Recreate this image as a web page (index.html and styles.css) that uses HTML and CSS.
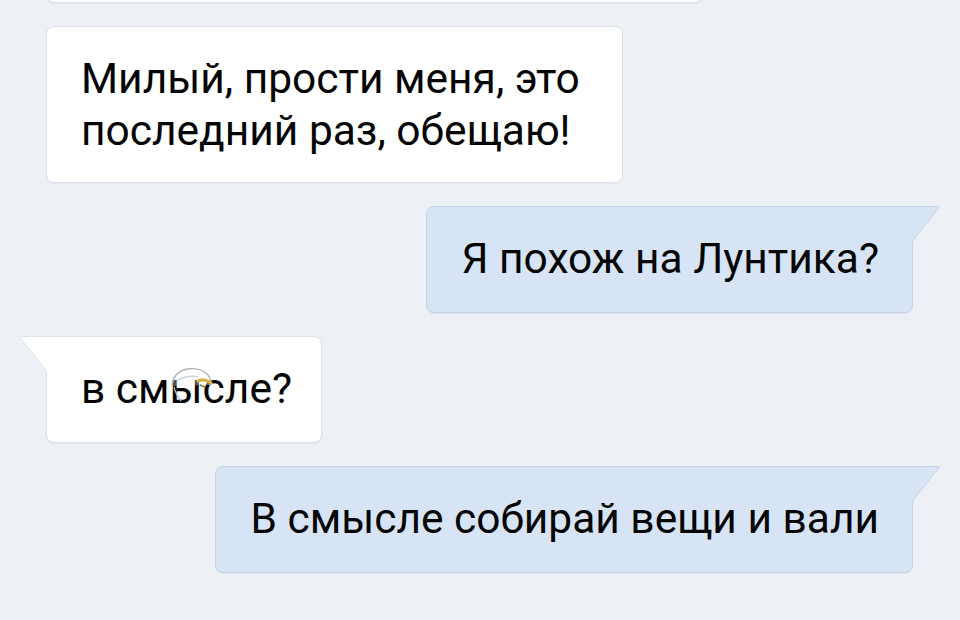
FILE: index.html
```html
<!DOCTYPE html>
<html lang="ru">
<head>
<meta charset="utf-8">
<title>Чат</title>
<link rel="stylesheet" href="styles.css">
</head>
<body>
<div class="chat">
  <div class="msg in stub"></div>
  <div class="msg in roomy"><p class="text">Милый, прости меня, это<br>последний раз, обещаю!</p></div>
  <div class="msg out">
    <p class="text">Я похож на Лунтика?</p>
    <svg class="tail tail-out" width="29" height="38" viewBox="0 0 29 38" aria-hidden="true">
      <path d="M0 0 H27.5 Q29 0.3 28 2 L3.2 33 Q1.5 35.5 1.5 38 H0 Z" fill="#d6e4f5"/>
      <path d="M0 0.5 H27.3 Q28.6 0.8 27.6 2.2 L3 33 Q1.5 35.5 1.5 38" fill="none" stroke="#c3d2e5" stroke-width="1"/>
    </svg>
  </div>
  <div class="msg in tailed">
    <p class="text">в смысле?</p>
    <svg class="tail tail-in" width="29" height="38" viewBox="0 0 29 38" aria-hidden="true">
      <path d="M29 0 H1.5 Q0 0.3 1 2 L25.8 33 Q27.5 35.5 27.5 38 H29 Z" fill="#ffffff"/>
      <path d="M29 0.5 H1.7 Q0.4 0.8 1.4 2.2 L26 33 Q27.5 35.5 27.5 38" fill="none" stroke="#dde2e8" stroke-width="1"/>
    </svg>
    <svg class="speck" width="48" height="42" viewBox="0 0 48 42" aria-hidden="true">
      <path d="M3 22 Q4 8 18 5 Q32 3 39 11 Q43 16 40 21" fill="rgba(255,255,255,0.3)" stroke="#aeb3ba" stroke-width="1.4"/>
      <path d="M8 17 Q18 10 30 13" fill="none" stroke="#c8ccd2" stroke-width="1.1"/>
      <path d="M5 23 Q7 31 12 37" fill="none" stroke="#bfc3c9" stroke-width="1.2"/>
      <path d="M29 17 Q36 14 42 19" fill="none" stroke="#d4b245" stroke-width="3.2" stroke-linecap="round"/>
      <path d="M31 21 L36 23" fill="none" stroke="#8a7a40" stroke-width="1.4" stroke-linecap="round"/>
    </svg>
  </div>
  <div class="msg out">
    <p class="text">В смысле собирай вещи и вали</p>
    <svg class="tail tail-out" width="29" height="38" viewBox="0 0 29 38" aria-hidden="true">
      <path d="M0 0 H27.5 Q29 0.3 28 2 L3.2 33 Q1.5 35.5 1.5 38 H0 Z" fill="#d6e4f5"/>
      <path d="M0 0.5 H27.3 Q28.6 0.8 27.6 2.2 L3 33 Q1.5 35.5 1.5 38" fill="none" stroke="#c3d2e5" stroke-width="1"/>
    </svg>
  </div>
</div>
</body>
</html>
```

FILE: styles.css
```css
html, body {
  margin: 0;
  padding: 0;
  background: #edf0f5;
  width: 960px;
  height: 620px;
  overflow: hidden;
  font-family: Roboto, "Noto Sans", "Liberation Sans", sans-serif;
}

.chat {
  display: flex;
  flex-direction: column;
  gap: 23px;
  padding: 0 47px 0 46px;
  margin-top: -57px;
}

.msg {
  position: relative;
  box-sizing: border-box;
  border: 1px solid #dde2e8;
  border-radius: 8px;
  padding: 26px 33px 27px 34px;
  box-shadow: 0 1px 1px rgba(60, 80, 110, 0.06);
}

.msg.in {
  align-self: flex-start;
  background: #ffffff;
}

.msg.roomy {
  padding-right: 42px;
  padding-bottom: 25px;
}

.msg.out {
  align-self: flex-end;
  background: #d6e4f5;
  border-color: #c3d2e5;
  border-top-right-radius: 0;
}

.msg.tailed {
  border-top-left-radius: 0;
  padding-right: 29px;
}

.msg.stub {
  width: 656px;
  height: 60px;
  padding: 0;
}

.text {
  margin: 0;
  font-size: 42.5px;
  line-height: 52px;
  color: #050505;
  white-space: nowrap;
}

.tail {
  position: absolute;
  top: -1px;
  display: block;
}

.tail-out {
  left: 100%;
  margin-left: -1px;
}

.tail-in {
  right: 100%;
  margin-right: -1px;
}

.speck {
  position: absolute;
  left: 122px;
  top: 27px;
}
```
